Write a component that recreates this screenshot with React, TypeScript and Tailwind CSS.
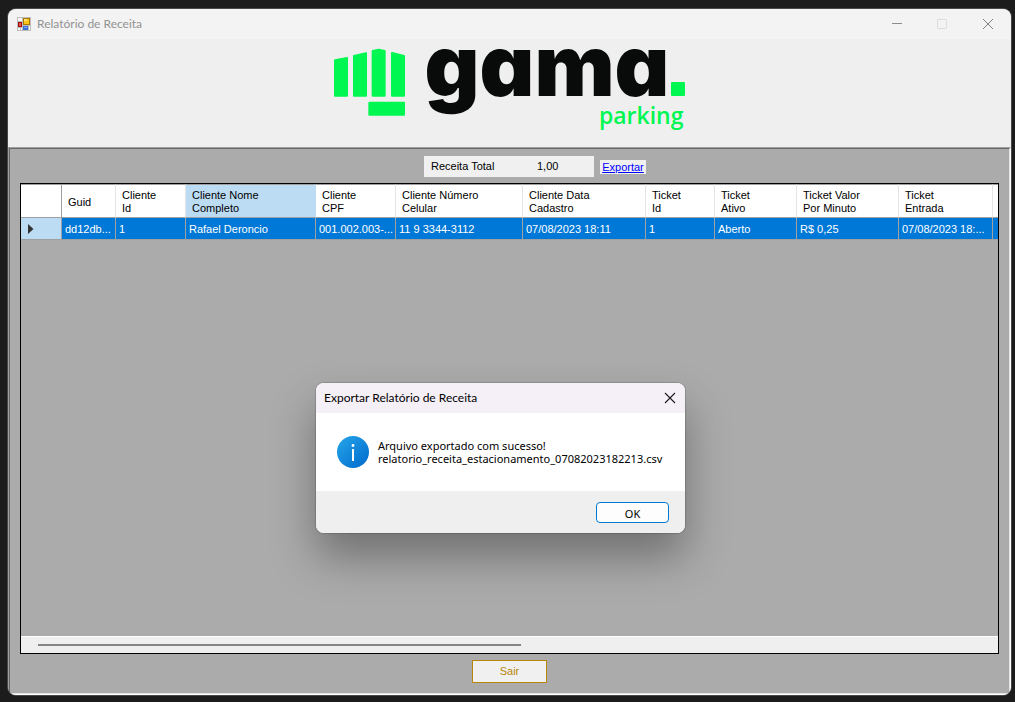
import React from "react";

type Column = { title: string; value: string; width: string };

const columns: Column[] = [
  { title: "Guid", value: "dd12db...", width: "w-[54px]" },
  { title: "Cliente\nId", value: "1", width: "w-[70px]" },
  { title: "Cliente Nome\nCompleto", value: "Rafael Deroncio", width: "w-[130px]" },
  { title: "Cliente\nCPF", value: "001.002.003-...", width: "w-[80px]" },
  { title: "Cliente Número\nCelular", value: "11 9 3344-3112", width: "w-[127px]" },
  { title: "Cliente Data\nCadastro", value: "07/08/2023 18:11", width: "w-[123px]" },
  { title: "Ticket\nId", value: "1", width: "w-[69px]" },
  { title: "Ticket\nAtivo", value: "Aberto", width: "w-[82px]" },
  { title: "Ticket Valor\nPor Minuto", value: "R$ 0,25", width: "w-[102px]" },
  { title: "Ticket\nEntrada", value: "07/08/2023 18:...", width: "w-[94px]" },
];

const SORTED = 2;

function FormIcon() {
  return (
    <svg className="size-[14px]" viewBox="0 0 14 14" aria-hidden="true">
      <rect width="14" height="14" fill="#bdbdbd" />
      <path d="M1 1h4v3H1zM1 11h2v2H1zM4 11h1v2H4zM12 9h1v4h-1z" fill="#f8f8f8" />
      <rect x="1" y="5" width="4" height="5" fill="#a01008" />
      <rect x="2" y="6" width="2" height="3" fill="#e0564a" />
      <rect x="6" y="1" width="7" height="7" fill="#a87800" />
      <rect x="7" y="2" width="5" height="5" fill="#fcc419" />
      <rect x="7" y="2" width="3" height="2" fill="#ffe07a" />
      <rect x="6" y="9" width="5" height="4" fill="#3a6fd8" />
      <rect x="7" y="10" width="3" height="1" fill="#7fa8f5" />
    </svg>
  );
}

function TitleBar() {
  return (
    <header className="flex h-[30px] shrink-0 items-center bg-[#f3f3f3] pl-[9px] text-[#929292]">
      <FormIcon />
      <h1 className="ml-[6px] flex-1 font-['Lato',sans-serif] text-[12px]">Relatório de Receita</h1>
      <button aria-label="Minimizar" className="flex h-full w-[46px] items-center justify-center">
        <svg className="h-[10px] w-[10px]" viewBox="0 0 10 10"><path d="M0 4.500h10" stroke="#8c8c8c" /></svg>
      </button>
      <button aria-label="Maximizar" disabled className="flex h-full w-[44px] items-center justify-center">
        <svg className="h-[10px] w-[10px]" viewBox="0 0 10 10"><rect x=".5" y=".5" width="9" height="9" rx=".5" fill="none" stroke="#dedede" /></svg>
      </button>
      <button aria-label="Fechar" className="flex h-full w-[47px] items-center justify-center">
        <svg className="h-[10px] w-[10px]" viewBox="0 0 10 10"><path d="M0 0l10 10M10 0L0 10" stroke="#808080" /></svg>
      </button>
    </header>
  );
}

function Logo() {
  return (
    <div className="flex h-[108px] shrink-0 justify-center bg-[#efefef] pt-[9px]">
      <svg className="h-[68px] w-[71px]" viewBox="42 39 213 204" aria-hidden="true">
        <g fill="#00f751" stroke="#00f751" strokeWidth="6" strokeLinejoin="round">
          <path d="M45 76L81 69V182H45zM102 63L138 55V182H102zM158 48L176 44L194 48V182H158zM216 54L252 63V182H216z" />
          <path d="M148 203H252V239H148z" />
        </g>
      </svg>
      <div className="ml-[20px] flex flex-col items-end">
        <div className="flex h-[50px] items-end gap-[2px]">
          <span className="font-['Inter',sans-serif] text-[85px] leading-[64px] font-black text-[#090b0a] [font-feature-settings:'cv11']">gama</span>
          <span className="mb-[2px] size-[14px] rounded-[1px] bg-[#00f751]" />
        </div>
        <span className="pr-[2px] font-['Open_Sans',sans-serif] text-[23px] leading-[34px] font-semibold text-[#00f751]">parking</span>
      </div>
    </div>
  );
}

function ReportGrid() {
  return (
    <section className="flex w-full flex-1 flex-col overflow-hidden border border-black">
      <table className="w-full table-fixed border-separate border-spacing-0 text-[11px] leading-[13px]">
        <colgroup>
          <col className="w-[41px]" />
          {columns.map((c, i) => <col key={i} className={c.width} />)}
          <col />
        </colgroup>
        <thead>
          <tr className="h-[34px] bg-white text-left">
            <td className="border-y border-r border-[#a0a0a0]" />
            {columns.map((c, i) => (
              <th
                key={i}
                className={`border-y border-r border-t-[#a0a0a0] border-b-[#a0a0a0] pt-[2px] pl-[6px] font-normal whitespace-pre ${i === SORTED ? "border-r-[#bcdcf4] bg-[#bcdcf4]" : "border-r-[#e5e5e5]"}`}
              >
                {c.title}
              </th>
            ))}
            <td className="border-y border-[#a0a0a0]" />
          </tr>
        </thead>
        <tbody>
          <tr className="h-[22px] bg-[#0078d7] text-white">
            <td className="border-r border-b border-[#a0a0a0] bg-[#bcdcf4]">
              <svg className="ml-[7px] h-[10px] w-[6px]" viewBox="0 0 6 10" aria-hidden="true">
                <path d="M0 0l5.500 5L0 10z" fill="#333" />
              </svg>
            </td>
            {columns.map((c, i) => (
              <td key={i} className="overflow-hidden border-r border-b border-[#a0a0a0] pt-[2px] pl-[3px] whitespace-nowrap">
                {c.value}
              </td>
            ))}
            <td className="border-b border-[#a0a0a0]" />
          </tr>
        </tbody>
      </table>
      <div className="mt-auto flex h-[17px] shrink-0 items-center border-t border-white bg-[#efefef] px-[17px]">
        <div className="h-[2px] w-[51.2%] bg-[#858585]" />
      </div>
    </section>
  );
}

function ExportDialog() {
  return (
    <div
      role="dialog"
      aria-labelledby="dialog-title"
      className="absolute top-[383px] left-[316px] w-[369px] overflow-hidden rounded-[8px] bg-white shadow-[0_0_1px_1px_rgba(0,0,0,0.15),0_24px_44px_0_rgba(0,0,0,0.34)]"
    >
      <div className="flex h-[30px] items-center justify-between bg-[#f5f0f8] pl-[8px]">
        <h2 id="dialog-title" className="font-['Lato',sans-serif] text-[12px]">Exportar Relatório de Receita</h2>
        <button aria-label="Fechar" className="flex h-full w-[30px] items-center justify-center">
          <svg className="h-[10px] w-[10px] overflow-visible" viewBox="0 0 10 10"><path d="M0 0l10 10M10 0L0 10" stroke="#1a1a1a" strokeWidth="1.1" /></svg>
        </button>
      </div>
      <div className="flex h-[78px] items-center gap-[9px] pl-[21px]">
        <svg className="size-[32px]" viewBox="0 0 32 32" aria-hidden="true">
          <defs>
            <linearGradient id="info" x1="0" y1="0" x2="1" y2="1">
              <stop stopColor="#26a6ea" />
              <stop offset="1" stopColor="#0069cc" />
            </linearGradient>
          </defs>
          <circle cx="16" cy="16" r="16" fill="url(#info)" />
          <circle cx="16" cy="9.500" r="1.400" fill="#fff" />
          <path d="M16 13v12" stroke="#fff" strokeWidth="2" />
        </svg>
        <p className="font-['Noto_Sans',sans-serif] text-[11px] leading-[13px]">
          Arquivo exportado com sucesso!<br />relatorio_receita_estacionamento_07082023182213.csv
        </p>
      </div>
      <div className="flex h-[42px] items-center justify-end bg-[#efefef] pr-[16px]">
        <button className="h-[21px] w-[73px] rounded-[4px] border border-[#0078d4] bg-[#fdfdfd] pt-[2px] font-['Noto_Sans',sans-serif] text-[11px] leading-[17px]">OK</button>
      </div>
    </div>
  );
}

export default function App() {
  return (
    <div className="relative flex min-h-screen bg-[#1c1c1c] pt-[9px] pr-[4px] pb-[7px] pl-[8px] font-['Liberation_Sans',sans-serif] text-black">
      <div className="flex flex-1 flex-col overflow-hidden rounded-[8px] bg-[#ababab] shadow-[0_0_0_1px_#484848]">
        <TitleBar />
        <Logo />
        <main className="flex flex-1 flex-col items-center gap-[6px] border border-t-[#a0a0a0] border-r-white border-b-white border-l-[#a0a0a0]">
          <div className="flex w-full flex-1 flex-col items-center gap-[6px] border border-t-[#696969] border-r-[#e3e3e3] border-b-[#e3e3e3] border-l-[#696969] px-[10px] pt-[7px] pb-[10px] text-[11px]">
            <div className="flex items-center gap-[6px] pl-[51px]">
              <div className="flex h-[21px] w-[170px] items-center bg-[#f0f0f0] pl-[7px]">
                <span className="w-[106px]">Receita Total</span>
                <output>1,00</output>
              </div>
              <a href="#exportar" className="h-[14px] w-[46px] bg-[#f0f0f0] text-center leading-[14px] text-[#0000ff] underline">Exportar</a>
            </div>
            <ReportGrid />
            <button className="h-[23px] w-[75px] shrink-0 border border-[#b8860b] bg-[#f0f0f0] text-[#b8860b]">Sair</button>
          </div>
        </main>
      </div>
      <ExportDialog />
    </div>
  );
}
